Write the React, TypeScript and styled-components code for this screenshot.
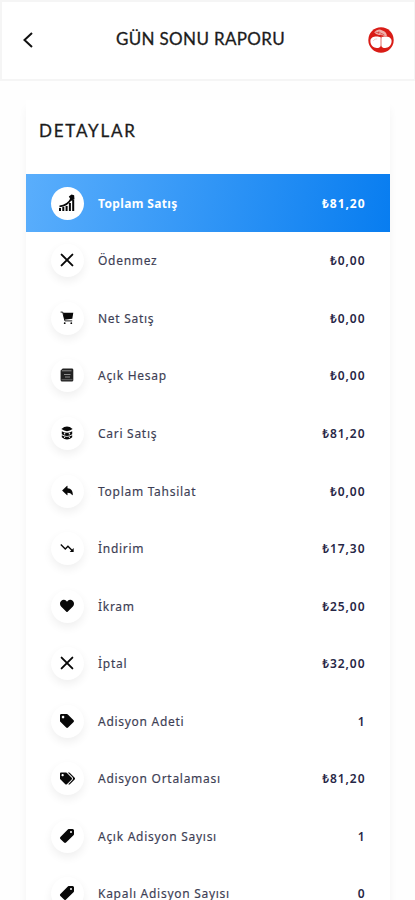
import React from "react";
import styled, { createGlobalStyle } from "styled-components";
import { FaHeart, FaTag, FaTags } from "react-icons/fa";
import { IoPricetag, IoArrowUndo } from "react-icons/io5";
import { MdTrendingDown } from "react-icons/md";

const GlobalStyle = createGlobalStyle`
  * { box-sizing: border-box; }
  html, body { margin: 0; background: #fefefe; }
  body { height: 900px; overflow: hidden; font-family: "Noto Sans", sans-serif; }
`;

const Page = styled.main`
  width: 415px;
  height: 900px;
  overflow: hidden;
  background: #fefefe;
`;

const Header = styled.header`
  height: 81px;
  display: grid;
  grid-template-columns: 28px 1fr 26px;
  align-items: center;
  padding: 0 20px 2px 18px;
  background: #fff;
  border: 2px solid #f5f5f5;
  border-right-width: 1px;
`;

const BackButton = styled.button`
  display: flex;
  width: 28px;
  padding: 0;
  border: 0;
  background: none;
`;

const Title = styled.h1<{ $spacing: string }>`
  margin: 0;
  font: 400 17px/24px Lato, sans-serif;
  letter-spacing: ${(p) => p.$spacing};
  color: #1c1c1c;
  -webkit-text-stroke: 0.3px #1c1c1c;
  white-space: nowrap;
`;

const HeaderTitle = styled(Title)`
  text-align: center;
  padding: 0 15px 2px 0;
`;

const Card = styled.section`
  width: 364px;
  height: 860px;
  margin: 19px 0 0 26px;
  background: #fff;
  box-shadow: 0 8px 8px rgba(0, 0, 0, 0.045);
`;

const CardHeading = styled.div`
  height: 74px;
  padding: 19px 0 0 13px;
`;

const Row = styled.div<{ $active?: boolean }>`
  height: 57.55px;
  display: flex;
  align-items: center;
  padding: 1px 24.5px 0 25px;
  color: ${(p) => (p.$active ? "#fff" : "#3d3e54")};
  background: ${(p) => (p.$active ? "linear-gradient(100deg, #5aaefc 0%, #087df0 100%)" : "transparent")};
`;

const IconDisc = styled.span<{ $flat?: boolean }>`
  width: 33px;
  height: 33px;
  flex: none;
  display: flex;
  align-items: center;
  justify-content: center;
  padding: 0 1px 1px 0;
  border-radius: 50%;
  background: #fff;
  color: #080808;
  box-shadow: ${(p) => (p.$flat ? "none" : "0 4px 10px rgba(0, 0, 0, 0.065)")};
  svg { display: block; }
`;

const Label = styled.span<{ $bold?: boolean; $spacing: number }>`
  margin: 1px 0 0 14px;
  font-size: 12px;
  line-height: 18px;
  font-weight: ${(p) => (p.$bold ? 700 : 400)};
  letter-spacing: ${(p) => p.$spacing}px;
  -webkit-text-stroke: ${(p) => (p.$bold ? 0 : 0.15)}px currentColor;
  white-space: nowrap;
`;

const Amount = styled.span<{ $active?: boolean }>`
  margin: 1px 0 0 auto;
  font-size: 12px;
  line-height: 18px;
  font-weight: ${(p) => (p.$active ? 700 : 600)};
  letter-spacing: 0.95px;
  color: ${(p) => (p.$active ? "#fff" : "#272746")};
`;

const Growth = () => (
  <svg width="18" height="18" viewBox="0 0 18 18" fill="currentColor">
    <path d="M1 14h2v3H1zM4.3 13h2v4h-2zM7.6 12h2v5h-2zM10.9 9h2v8h-2zM14.2 6h2v11h-2z" />
    <path d="M1.5 12.3C7 12 11.2 9 13.6 4.2" fill="none" stroke="currentColor" strokeWidth="1.8" />
    <path d="m10.8 2.5 2.7-2 2.6.8.4 4-3 1.7z" />
  </svg>
);

const Cross = () => (
  <svg width="14" height="14" viewBox="0 0 14 14" fill="none" stroke="currentColor" strokeWidth="1.9" strokeLinecap="round">
    <path d="m1.6 1.6 10.8 10.8M12.4 1.6 1.6 12.4" />
  </svg>
);

const Cart = () => (
  <svg width="14" height="14" viewBox="0 0 14 14" fill="currentColor">
    <path d="M3 1.8h10.3l-1 5.9-7.9 1z" />
    <path d="M.6 1.1h2.1l2.2 8.8h7.3" fill="none" stroke="currentColor" strokeWidth=".9" />
    <circle cx="4.7" cy="12.2" r=".9" /><circle cx="11.3" cy="12.2" r=".9" />
  </svg>
);

const Ledger = () => (
  <svg width="14" height="14" viewBox="0 0 14 14">
    <path d="M2.7.4h9.2q1.4 0 1.4 1.4v10.4q0 1.4-1.4 1.4H2.2Q.6 13.6.6 12V2.6Z" fill="#222" />
    <path d="M1.8 2.8h9.7M4 6.5h6.5M5 9h5" stroke="#aaa" strokeWidth=".8" />
    <path d="M1.5 11.7h11" stroke="#777" strokeWidth=".8" />
  </svg>
);

const Stack = () => (
  <svg width="12" height="14" viewBox="0 0 12 14" fill="currentColor">
    <path d="M.4 3Q6-1.8 11.6 3 6 7.3.4 3z" />
    <path d="M.8 5.2q5.2 3 10.4 0v3.1q-5.2 3.6-10.4 0zM.8 9.3q5.2 3 10.4 0v2q-5.2 4.4-10.4 0z" />
    <g fill="#fff"><circle cx="3.6" cy="7.8" r=".8" /><circle cx="8.4" cy="7.8" r=".8" /><circle cx="3.6" cy="11.3" r=".6" /><circle cx="8.4" cy="11.3" r=".6" /></g>
  </svg>
);

const CherryLogo = () => (
  <svg width="26" height="26" viewBox="0 0 26 26">
    <circle cx="13" cy="13" r="12.7" fill="#d91c16" />
    <path d="M12.9 10.6C9.4 8.8 2.4 9.2 2.4 14c0 7.6 9 8.8 10.6 4.4 1.6 4.4 10.6 3.2 10.6-4.4 0-4.8-7.2-5.2-10.7-3.4Z" fill="#fff" />
    <path d="M13 19v-7q0-4 2-6.5" fill="none" stroke="#dc4a43" strokeWidth=".8" />
    <path d="M6.2 5.3Q10 .8 14.4 3.5q3.8.8 4.6 5.3-4 .7-5.9-1.3Q9.3 9.4 6.2 5.3Z" fill="#f0b0ab" />
    <path d="m7.5 5.2 5 .8 3.8 1.8M11 4.2l-1 3" fill="none" stroke="#d83830" strokeWidth=".7" />
    <path d="M5.2 14q1-2.4 4-2.1" fill="none" stroke="#eab3af" strokeWidth=".6" />
  </svg>
);

type Item = { label: string; value: string; icon: React.ReactNode; spacing?: number };

const items: Item[] = [
  { label: "Toplam Satış", value: "₺81,20", icon: <Growth />, spacing: 0.35 },
  { label: "Ödenmez", value: "₺0,00", icon: <Cross /> },
  { label: "Net Satış", value: "₺0,00", icon: <Cart /> },
  { label: "Açık Hesap", value: "₺0,00", icon: <Ledger /> },
  { label: "Cari Satış", value: "₺81,20", icon: <Stack /> },
  { label: "Toplam Tahsilat", value: "₺0,00", icon: <IoArrowUndo size={13} /> },
  { label: "İndirim", value: "₺17,30", icon: <MdTrendingDown size={16} /> },
  { label: "İkram", value: "₺25,00", icon: <FaHeart size={14} /> },
  { label: "İptal", value: "₺32,00", icon: <Cross /> },
  { label: "Adisyon Adeti", value: "1", icon: <FaTag size={14} /> },
  { label: "Adisyon Ortalaması", value: "₺81,20", icon: <FaTags size={15} /> },
  { label: "Açık Adisyon Sayısı", value: "1", icon: <IoPricetag size={16} /> },
  { label: "Kapalı Adisyon Sayısı", value: "0", icon: <IoPricetag size={16} /> },
];

export default function App() {
  return (
    <>
      <GlobalStyle />
      <Page>
        <Header>
          <BackButton aria-label="Geri">
            <svg width="14" height="18" viewBox="0 0 14 18" fill="none" stroke="#111" strokeWidth="2">
              <path d="M12 2 4.5 9l7.5 7" />
            </svg>
          </BackButton>
          <HeaderTitle $spacing="0.35px">GÜN SONU RAPORU</HeaderTitle>
          <CherryLogo />
        </Header>
        <Card>
          <CardHeading>
            <Title as="h2" $spacing="1.8px">DETAYLAR</Title>
          </CardHeading>
          {items.map((item, i) => (
            <Row key={item.label} $active={i === 0}>
              <IconDisc $flat={i === 0}>{item.icon}</IconDisc>
              <Label $bold={i === 0} $spacing={item.spacing ?? 0.72}>{item.label}</Label>
              <Amount $active={i === 0}>{item.value}</Amount>
            </Row>
          ))}
        </Card>
      </Page>
    </>
  );
}
